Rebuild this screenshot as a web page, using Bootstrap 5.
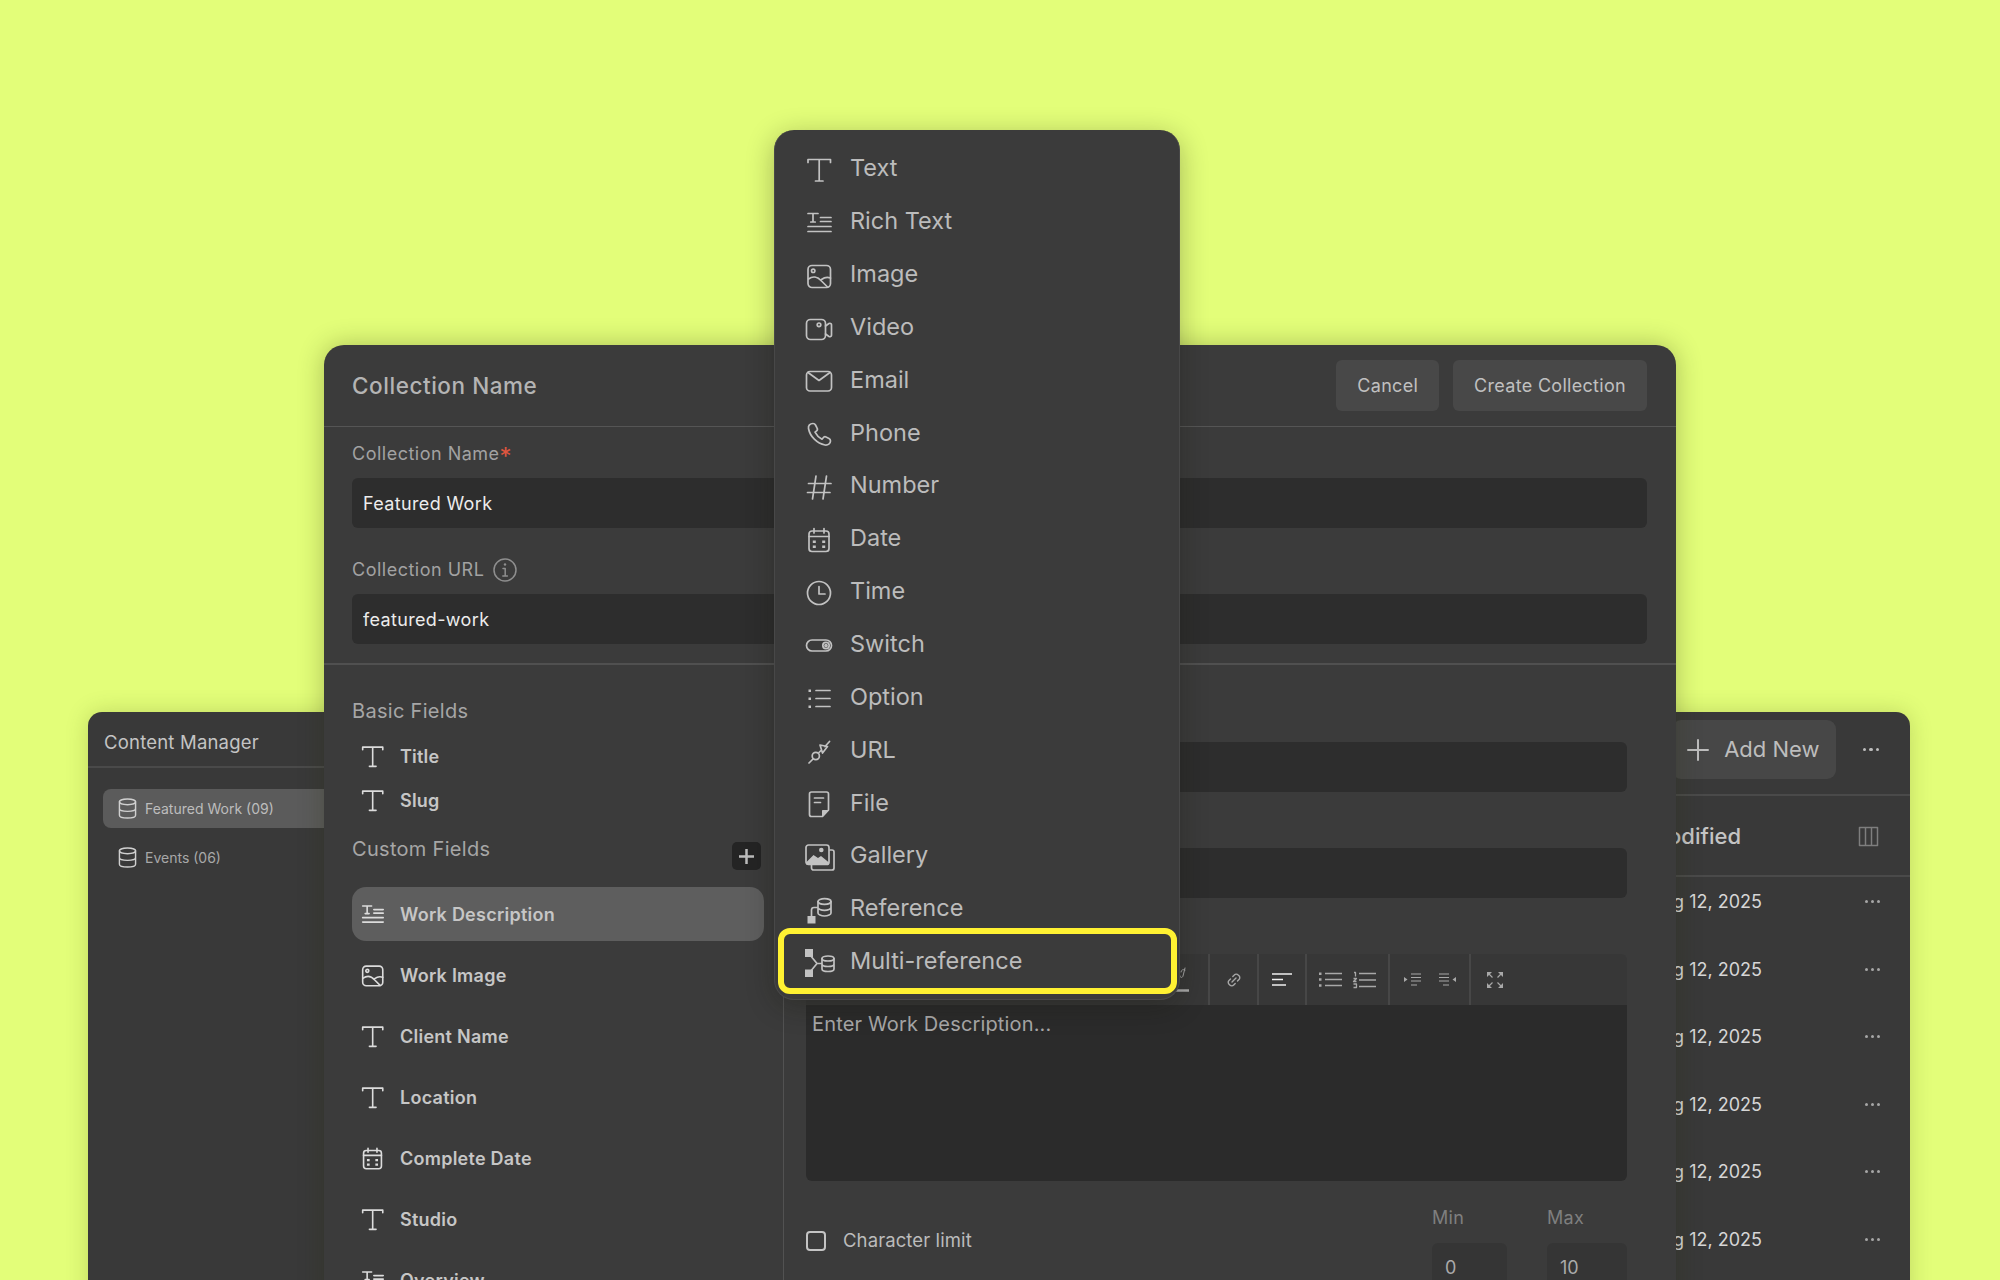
<!doctype html>
<html lang="en">
<head>
<meta charset="utf-8">
<title>Collection</title>
<link rel="stylesheet" href="https://cdn.jsdelivr.net/npm/bootstrap@5.3.0/dist/css/bootstrap.min.css">
<style>
html,body{margin:0;height:1280px;overflow:hidden}
body{background:#e3fe79;font-family:Inter,"Liberation Sans",sans-serif;color:#bdbdbd}
.stage{position:relative;width:2000px;height:1280px;overflow:hidden}
svg,symbol{overflow:visible}
svg{flex:none;fill:none;stroke:currentColor;stroke-width:1.5;stroke-linecap:round;stroke-linejoin:round}
.solid{fill:currentColor;stroke:none}

/* back window */
.win-back{position:absolute;left:88px;top:712px;width:1822px;height:700px;background:#393939;border-radius:14px 14px 0 0;box-shadow:0 0 22px rgba(70,80,20,.22)}
.back-side{width:320px;flex:none}
.back-head{height:56px;padding:8px 17px 0 16px;border-bottom:2px solid #4a4a4a;font-size:18.5px;letter-spacing:.2px;color:#c4c4c4}
.mini-btn{width:60px;height:28px;background:#444;border-radius:4px;margin-top:-8px}
.back-nav{padding:21px 15px}
.back-link{height:39px;padding-left:15px;border-radius:8px;font-size:14px;color:#a8a8a8;gap:8px;margin-bottom:10px}
.back-link.on{background:#5b5b5b;color:#bdbdbd}
.back-link svg{color:#d0d0d0}
.back-tools{height:84px;border-bottom:2px solid #4a4a4a;padding-right:31px;padding-bottom:7px}
.add-btn{--bs-btn-bg:#474747;--bs-btn-color:#bdbdbd;--bs-btn-border-width:0;--bs-btn-padding-x:16px;--bs-btn-padding-y:0;height:59px;font-size:22px;gap:16px;border-radius:9px;margin-right:27px}
.back-thead{height:81px;border-bottom:2px solid #4a4a4a;padding-right:32px;padding-top:2px;font-size:22px;font-weight:500;color:#c4c4c4;gap:118px}
.back-row{height:67.5px;padding-right:30px;font-size:18px;color:#d6d6d6;gap:103px}
.back-rows{margin-top:-9px}
.dots{display:flex;gap:3px}
.dots i{width:3px;height:3px;border-radius:50%;background:#a6a6a6;display:block}
.dots.lg i{width:3.5px;height:3.5px;background:#bdbdbd}

/* front window */
.win-front{position:absolute;left:324px;top:345px;width:1352px;height:1000px;background:#3b3b3b;border-radius:20px 20px 0 0;box-shadow:0 0 26px rgba(40,45,10,.3)}
.front-head{height:82px;padding:0 29px 0 28px;border-bottom:1px solid #555;gap:14px}
.front-title{font-size:22.5px;font-weight:500;letter-spacing:.55px;color:#b4b4b4;margin:0}
.ghost-btn{--bs-btn-bg:#484848;--bs-btn-color:#c0c0c0;--bs-btn-border-width:0;--bs-btn-padding-x:21px;--bs-btn-padding-y:0;height:51px;font-size:18px;letter-spacing:.3px;border-radius:6px}
.front-top{padding:13px 29px 19px 28px;border-bottom:2px solid #505050}
.fld-label{font-size:18px;line-height:27px;letter-spacing:.5px;color:#a2a2a2;margin:0 0 11px;gap:9px}
.req{color:#e0563f;font-size:24px;line-height:0;vertical-align:-5px;letter-spacing:0}
.dark-input{background:#2d2d2d;border:0;border-radius:6px;height:50px;padding:0 11px;font-size:18px;letter-spacing:.35px;color:#ececec;box-shadow:none}
.dark-input:focus{background:#2d2d2d;color:#ececec;box-shadow:none}
.gap-after{margin-bottom:28px}
.front-left{width:460px;flex:none;padding:32px 19px 0 28px;border-right:1px solid #525252}
.grp-title{font-size:20px;line-height:28px;letter-spacing:.3px;color:#a6a6a6;margin:0}
.fld-row{height:44px;gap:15px;padding-left:8px;font-size:18px;font-weight:600;letter-spacing:.2px;color:#c6c6c6}
.fld-row svg,.cust-row svg{color:#dcdcdc}
.fld-rows{margin:9px 0 0}
.custom-head{margin-top:8px;height:40px}
.custom-head .grp-title{margin-top:5px}
.plus-btn{--bs-btn-bg:#242424;--bs-btn-color:#bcbcbc;--bs-btn-border-width:0;--bs-btn-padding-x:0;--bs-btn-padding-y:0;width:29px;height:28px;border-radius:5px;margin-top:12px;margin-right:3px}
.cust-rows{margin-top:17px}
.cust-row{height:61px;gap:15px;padding-left:8px;font-size:18px;font-weight:600;letter-spacing:.25px;color:#c6c6c6}
.cust-row.on{height:54px;background:#5e5e5e;border-radius:14px;margin-bottom:3.5px}
.front-right{flex:1;padding:77px 49px 0 22px}
.right-input{margin-bottom:56px}
.tools{height:51px;background:#373737;border-radius:6px 6px 0 0;color:#a8a8a8}
.tool-g{height:100%;border-right:2px solid #474747;gap:16px}
.tool-a{width:404px;justify-content:flex-end;padding-right:18px}
.tool-b{width:49px}.tool-c{width:48px}.tool-d{width:83px;gap:11px}.tool-e{width:81px;gap:18px}
.bright{color:#f0f0f0}
.editor{height:176px;background:#2b2b2b;border:0;border-radius:0 0 6px 6px;padding:4px 6px;font-size:20px;letter-spacing:.15px;color:#bbb;resize:none;box-shadow:none}
.editor::placeholder{color:#a8a8a8;opacity:1}
.limit-row{margin-top:25px}
.form-check .check-dark{width:20px;height:20px;margin:0;background-color:transparent;border:2px solid #c4c4c4;border-radius:4px;flex:none}
.check-row{height:70px}
.check-label{font-size:18.5px;letter-spacing:.1px;color:#bcbcbc;margin-left:17px}
.lim-col{width:75px}
.lim-col.wide{width:80px;margin-left:40px}
.lim-lab{font-size:18px;line-height:24px;letter-spacing:.3px;color:#7f7f7f;margin-bottom:13px}
.lim-input{background:#353535;border:0;border-radius:6px;height:48px;padding:0 13px;font-size:18px;color:#aaa;box-shadow:none}

/* dropdown */
.type-menu.dropdown-menu{position:absolute;left:774px;top:130px;width:406px;height:870px;margin:0;padding:11.5px 0 0;background:#3b3b3b;border:1px solid #484848;border-top:0;border-radius:20px;box-shadow:0 6px 28px rgba(20,20,10,.3);display:block}
.type-menu .dropdown-item{height:52.87px;padding:0 0 0 30px;display:flex;align-items:center;gap:17px;font-size:23.5px;color:#bcbcbc;background:transparent;position:relative}
.type-menu .dropdown-item svg{margin-top:4px;color:#c2c2c2;stroke-width:1.7}
.type-menu .picked::after{content:"";position:absolute;left:3px;right:2px;top:-6.5px;bottom:-6.5px;border:6px solid #fff132;border-radius:12px;pointer-events:none}
</style>
</head>
<body>
<svg width="0" height="0" style="position:absolute">
<defs>
<symbol id="i-t" viewBox="0 0 28 28"><path d="M3 6.5V3.5H25.5V6.5M14.2 3.5V25M10.5 25H18"/></symbol>
<symbol id="i-rich" viewBox="0 0 28 28"><path d="M3 4.5H13M8 4.5V13M5.8 13H10.200M15.500 8.500H26M15.500 12.500H26M3 17.500H26M3 22.500H26"/></symbol>
<symbol id="i-image" viewBox="0 0 28 28"><rect x="3" y="3.5" width="22.5" height="22" rx="4"/><circle cx="8.2" cy="8.8" r="1.7"/><path d="M3.5 17c4-3 9-2.5 13 2l6 6M16.5 17.5c3-2.2 6-2.5 9-1.5"/></symbol>
<symbol id="i-video" viewBox="0 0 28 28"><rect x="1.5" y="4.5" width="19" height="20" rx="4"/><circle cx="14" cy="9.8" r="1.8"/><path d="M20.5 11l3.5-2.5c1-.6 2.5 0 2.5 1.2v10.6c0 1.2-1.5 1.8-2.5 1.2l-3.5-2.5"/></symbol>
<symbol id="i-mail" viewBox="0 0 28 28"><rect x="1.5" y="4.5" width="25" height="19.5" rx="3.5"/><path d="M3 5.5l11 8 11-8"/></symbol>
<symbol id="i-phone" viewBox="0 0 28 28"><path d="M8 3.5c-3 0-5 2-4.5 5C5 16.500 12 23.500 20 25c3 .5 5.500-1.500 5.500-4 0-1-.5-2-1.500-2.500l-3-1.500c-1.200-.6-2.300 0-3 1l-1 1.200c-3-1.500-5.500-4-7-7l1.300-1c1-.8 1.400-2 .8-3L10.500 5C10 4 9 3.500 8 3.500Z"/></symbol>
<symbol id="i-hash" viewBox="0 0 28 28"><path d="M11 3L7.500 26M21.500 3L18 26M3.500 10.500H26M2.500 19.500H25"/></symbol>
<symbol id="i-date" viewBox="0 0 28 28"><rect x="4" y="5" width="20" height="20.500" rx="3"/><path d="M9 2.500V7M19 2.500V7M4 10.500H24"/><path class="solid" d="M7.800 14.500h3v2.500h-3zM17.200 14.500h3v2.500h-3zM7.800 19.500h3V22h-3zM17.200 19.500h3V22h-3z"/></symbol>
<symbol id="i-time" viewBox="0 0 28 28"><circle cx="14" cy="14" r="11.500"/><path d="M14 7.500V15H20"/></symbol>
<symbol id="i-switch" viewBox="0 0 28 28"><rect x="1.500" y="8" width="25" height="11" rx="5.500"/><circle cx="21" cy="13.500" r="3.200"/><circle cx="21" cy="13.500" r="1"/></symbol>
<symbol id="i-option" viewBox="0 0 28 28"><path d="M11 5.500H25M11 13.500H25M11 21.500H25"/><path class="solid" d="M3.500 4.500h2.500V7H3.500zM3.500 12.500h2.500V15H3.500zM3.500 20.500h2.500V23H3.500z"/></symbol>
<symbol id="i-url" viewBox="0 0 28 28"><path d="M4 26l4-4M14 15.500l2-2M20 9.500l4.500-5M15 8l7.500 1.500-5 6.500z"/><circle cx="10.800" cy="19" r="3.600"/></symbol>
<symbol id="i-file" viewBox="0 0 28 28"><path d="M6.500 2H21.500c1.100 0 2 .9 2 2V20l-6 6.500H6.500c-1.100 0-2-.9-2-2V4c0-1.100.9-2 2-2Z"/><path d="M9.500 8H18.500M9.500 12.500H15.500"/><path class="solid" d="M17 27v-6c0-.6.4-1 1-1h6z"/></symbol>
<symbol id="i-gallery" viewBox="0 0 28 28"><rect x="1" y="2" width="23" height="19.500" rx="2.500"/><path class="solid" d="M1 19.500l7.500-7.500 4.500 3 3-2 8 6.500v2H1zM14 7a2.300 2.300 0 1 0 4.600 0 2.300 2.300 0 1 0-4.600 0"/><path d="M25 7h2c1.100 0 2 .9 2 2v16c0 1.100-.9 2-2 2H8.500c-1.100 0-2-.9-2-2v-3"/></symbol>
<symbol id="i-ref" viewBox="0 0 28 28"><ellipse cx="19.500" cy="5.500" rx="6.500" ry="2.800"/><path d="M13 5.500V17c0 1.500 3 3 6.500 3s6.500-1.500 6.500-3V5.500M13 11.500c0 1.500 3 2.800 6.500 2.800s6.500-1.300 6.500-2.800M6.500 20v-6c0-1.500 1-2.500 2.500-2.500h4"/><rect class="solid" x="2.500" y="20" width="8" height="7.500"/></symbol>
<symbol id="i-multi" viewBox="0 0 28 28"><ellipse cx="23" cy="9.500" rx="6" ry="2.500"/><path d="M17 9.500V20c0 1.400 2.700 2.500 6 2.500s6-1.100 6-2.500V9.500M17 15c0 1.400 2.700 2.500 6 2.500s6-1.100 6-2.500M5 6l7 8.500L5 23M12 14.500h5"/><rect class="solid" x="0" y="0" width="8" height="8"/><rect class="solid" x="0" y="20.500" width="8" height="7.500"/></symbol>
<symbol id="i-db" viewBox="0 0 20 22"><ellipse cx="10" cy="4" rx="8.500" ry="3"/><path d="M1.500 4V18c0 1.700 3.800 3 8.500 3s8.500-1.300 8.500-3V4M1.500 11c0 1.700 3.800 3 8.500 3s8.500-1.300 8.500-3"/></symbol>
</defs>
</svg>

<div class="stage">

  <section class="win-back d-flex">
    <aside class="back-side">
      <div class="back-head d-flex align-items-center justify-content-between">
        <span>Content Manager</span><span class="mini-btn d-block"></span>
      </div>
      <nav class="back-nav">
        <div class="back-link on d-flex align-items-center"><svg width="19" height="21"><use href="#i-db"/></svg><span>Featured Work (09)</span></div>
        <div class="back-link d-flex align-items-center"><svg width="19" height="21"><use href="#i-db"/></svg><span>Events (06)</span></div>
      </nav>
    </aside>
    <div class="flex-grow-1">
      <div class="back-tools d-flex align-items-center justify-content-end">
        <button class="btn add-btn d-flex align-items-center" type="button">
          <svg width="20" height="20" viewBox="0 0 20 20" style="stroke-width:2"><path d="M10 0V20M0 10H20"/></svg>Add New
        </button>
        <span class="dots lg"><i></i><i></i><i></i></span>
      </div>
      <div class="back-thead d-flex align-items-center justify-content-end">
        <span>Last Modified</span>
        <svg width="19" height="19" viewBox="0 0 19 19" style="color:#7e7e7e;stroke-linecap:butt"><rect x=".5" y=".5" width="18" height="18"/><path d="M6.500 .5V18.500M12.500 .5V18.500"/></svg>
      </div>
      <div class="back-rows">
        <div class="back-row d-flex align-items-center justify-content-end"><span>Aug 12, 2025</span><span class="dots"><i></i><i></i><i></i></span></div>
        <div class="back-row d-flex align-items-center justify-content-end"><span>Aug 12, 2025</span><span class="dots"><i></i><i></i><i></i></span></div>
        <div class="back-row d-flex align-items-center justify-content-end"><span>Aug 12, 2025</span><span class="dots"><i></i><i></i><i></i></span></div>
        <div class="back-row d-flex align-items-center justify-content-end"><span>Aug 12, 2025</span><span class="dots"><i></i><i></i><i></i></span></div>
        <div class="back-row d-flex align-items-center justify-content-end"><span>Aug 12, 2025</span><span class="dots"><i></i><i></i><i></i></span></div>
        <div class="back-row d-flex align-items-center justify-content-end"><span>Aug 12, 2025</span><span class="dots"><i></i><i></i><i></i></span></div>
      </div>
    </div>
  </section>

  <section class="win-front d-flex flex-column">
    <header class="front-head d-flex align-items-center">
      <h2 class="front-title me-auto">Collection Name</h2>
      <button class="btn ghost-btn" type="button">Cancel</button>
      <button class="btn ghost-btn" type="button">Create Collection</button>
    </header>
    <div class="front-top">
      <label class="fld-label d-block">Collection Name<span class="req">*</span></label>
      <input class="form-control dark-input gap-after" value="Featured Work">
      <label class="fld-label d-flex align-items-center">Collection URL
        <svg width="24" height="24" viewBox="0 0 24 24" style="color:#8e8e8e"><circle cx="12" cy="12" r="11"/><path d="M10 10.500h2.200V18M9.800 18h4.600"/><circle class="solid" cx="12" cy="6.500" r="1.200"/></svg>
      </label>
      <input class="form-control dark-input" value="featured-work">
    </div>
    <div class="d-flex flex-grow-1">
      <div class="front-left">
        <p class="grp-title">Basic Fields</p>
        <div class="fld-rows">
          <div class="fld-row d-flex align-items-center"><svg width="25" height="25" style="stroke-width:1.800"><use href="#i-t"/></svg>Title</div>
          <div class="fld-row d-flex align-items-center"><svg width="25" height="25" style="stroke-width:1.800"><use href="#i-t"/></svg>Slug</div>
        </div>
        <div class="custom-head d-flex justify-content-between">
          <p class="grp-title">Custom Fields</p>
          <button class="btn plus-btn d-flex align-items-center justify-content-center" type="button" aria-label="Add field"><svg width="15" height="15" viewBox="0 0 15 15" style="stroke-width:2.500;stroke-linecap:butt"><path d="M7.500 0V15M0 7.500H15"/></svg></button>
        </div>
        <div class="cust-rows">
          <div class="cust-row on d-flex align-items-center"><svg width="25" height="25" style="stroke-width:1.800"><use href="#i-rich"/></svg>Work Description</div>
          <div class="cust-row d-flex align-items-center"><svg width="25" height="25" style="stroke-width:1.800"><use href="#i-image"/></svg>Work Image</div>
          <div class="cust-row d-flex align-items-center"><svg width="25" height="25" style="stroke-width:1.800"><use href="#i-t"/></svg>Client Name</div>
          <div class="cust-row d-flex align-items-center"><svg width="25" height="25" style="stroke-width:1.800"><use href="#i-t"/></svg>Location</div>
          <div class="cust-row d-flex align-items-center"><svg width="25" height="25" style="stroke-width:1.800"><use href="#i-date"/></svg>Complete Date</div>
          <div class="cust-row d-flex align-items-center"><svg width="25" height="25" style="stroke-width:1.800"><use href="#i-t"/></svg>Studio</div>
          <div class="cust-row d-flex align-items-center"><svg width="25" height="25" style="stroke-width:1.800"><use href="#i-rich"/></svg>Overview</div>
        </div>
      </div>
      <div class="front-right">
        <input class="form-control dark-input right-input" aria-label="Field name">
        <input class="form-control dark-input right-input" aria-label="Field key">
        <div class="tools d-flex">
          <div class="tool-g tool-a d-flex align-items-center">
            <svg width="16" height="24" viewBox="0 0 16 24" style="stroke-width:1"><path d="M11 0L9 8c-.5 2-3 2-3 0M11 2c-2-1-4 0-4 2" /><path d="M0 22.500H15" style="stroke-width:2.500;stroke-linecap:butt"/></svg>
          </div>
          <div class="tool-g tool-b d-flex align-items-center justify-content-center">
            <svg width="14" height="14" viewBox="0 0 14 14" style="stroke-width:1.400"><path d="M5.800 3.500l1.500-1.500a2.600 2.600 0 0 1 3.900 0l.8.800a2.600 2.600 0 0 1 0 3.700L10.500 8M8.200 10.500L6.700 12a2.600 2.600 0 0 1-3.900 0L2 11.200a2.600 2.600 0 0 1 0-3.700L3.500 6M5 9l4-4"/></svg>
          </div>
          <div class="tool-g tool-c d-flex align-items-center justify-content-center bright">
            <svg width="20" height="13" viewBox="0 0 20 13" style="stroke-width:1.500;stroke-linecap:butt"><path d="M0 1H20M0 6.500H11M0 12H14"/></svg>
          </div>
          <div class="tool-g tool-d d-flex align-items-center justify-content-center">
            <svg width="23" height="15" viewBox="0 0 23 15" style="stroke-width:1.300;stroke-linecap:butt"><path d="M6 1.500H23M6 7.500H23M6 13.500H23"/><path class="solid" d="M0 .5h2.500V3H0zM0 6.200h2.500v2.500H0zM0 12.200h2.500v2.500H0z"/></svg>
            <svg width="23" height="16" viewBox="0 0 23 16" style="stroke-width:1.300;stroke-linecap:butt"><path d="M6 1.500H23M6 8H23M6 14.500H23M1 .5h1.500v4M.5 6.500h3l-3 3h3M.5 12h3v3.500h-3"/></svg>
          </div>
          <div class="tool-g tool-e d-flex align-items-center justify-content-center">
            <svg width="17" height="14" viewBox="0 0 17 14" style="stroke-width:1.100;stroke-linecap:butt"><path d="M7 1H17M7 4.500H17M7 8H17M7 12H13"/><path class="solid" d="M0 4l3.500 2.500L0 9z"/></svg>
            <svg width="17" height="14" viewBox="0 0 17 14" style="stroke-width:1.100;stroke-linecap:butt"><path d="M0 1H10M0 4.500H10M0 8H10M4 12H10"/><path class="solid" d="M17 4l-3.500 2.500L17 9z"/></svg>
          </div>
          <div class="flex-grow-1 d-flex align-items-center ps-3">
            <svg width="16" height="16" viewBox="0 0 16 16" style="stroke-width:1.200;stroke-linecap:butt"><path d="M1 1l4.500 4.500M15 1l-4.500 4.500M1 15l4.500-4.500M15 15l-4.500-4.500"/><path class="solid" d="M0 0h5L0 5zM16 0h-5l5 5zM0 16h5l-5-5zM16 16h-5l5-5z"/></svg>
          </div>
        </div>
        <textarea class="form-control editor" placeholder="Enter Work Description..."></textarea>
        <div class="limit-row d-flex align-items-start">
          <div class="form-check check-row d-flex align-items-center flex-grow-1 p-0 m-0">
            <input class="form-check-input check-dark" type="checkbox" id="charLimit">
            <label class="check-label" for="charLimit">Character limit</label>
          </div>
          <div class="lim-col"><div class="lim-lab">Min</div><input class="form-control lim-input" value="0"></div>
          <div class="lim-col wide"><div class="lim-lab">Max</div><input class="form-control lim-input" value="10"></div>
        </div>
      </div>
    </div>
  </section>

  <ul class="dropdown-menu show type-menu">
    <li><a class="dropdown-item" href="#"><svg width="28" height="28"><use href="#i-t"/></svg>Text</a></li>
    <li><a class="dropdown-item" href="#"><svg width="28" height="28"><use href="#i-rich"/></svg>Rich Text</a></li>
    <li><a class="dropdown-item" href="#"><svg width="28" height="28"><use href="#i-image"/></svg>Image</a></li>
    <li><a class="dropdown-item" href="#"><svg width="28" height="28"><use href="#i-video"/></svg>Video</a></li>
    <li><a class="dropdown-item" href="#"><svg width="28" height="28"><use href="#i-mail"/></svg>Email</a></li>
    <li><a class="dropdown-item" href="#"><svg width="28" height="28"><use href="#i-phone"/></svg>Phone</a></li>
    <li><a class="dropdown-item" href="#"><svg width="28" height="28"><use href="#i-hash"/></svg>Number</a></li>
    <li><a class="dropdown-item" href="#"><svg width="28" height="28"><use href="#i-date"/></svg>Date</a></li>
    <li><a class="dropdown-item" href="#"><svg width="28" height="28"><use href="#i-time"/></svg>Time</a></li>
    <li><a class="dropdown-item" href="#"><svg width="28" height="28"><use href="#i-switch"/></svg>Switch</a></li>
    <li><a class="dropdown-item" href="#"><svg width="28" height="28"><use href="#i-option"/></svg>Option</a></li>
    <li><a class="dropdown-item" href="#"><svg width="28" height="28"><use href="#i-url"/></svg>URL</a></li>
    <li><a class="dropdown-item" href="#"><svg width="28" height="28"><use href="#i-file"/></svg>File</a></li>
    <li><a class="dropdown-item" href="#"><svg width="28" height="28"><use href="#i-gallery"/></svg>Gallery</a></li>
    <li><a class="dropdown-item" href="#"><svg width="28" height="28"><use href="#i-ref"/></svg>Reference</a></li>
    <li><a class="dropdown-item picked" href="#"><svg width="28" height="28"><use href="#i-multi"/></svg>Multi-reference</a></li>
  </ul>
</div>
</body>
</html>
